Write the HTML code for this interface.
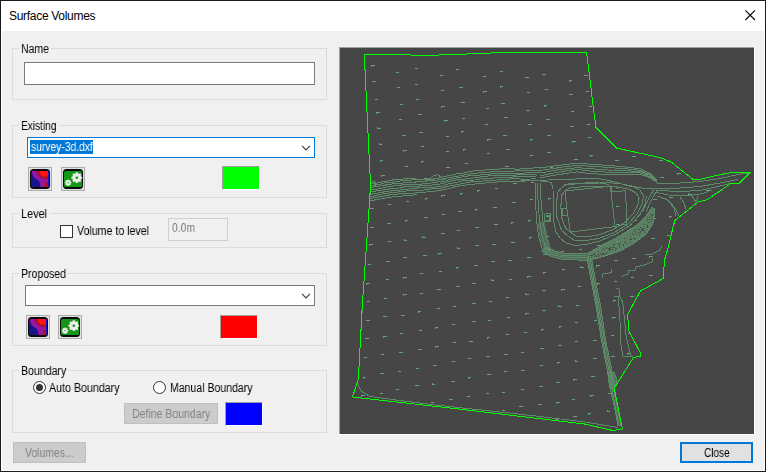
<!DOCTYPE html>
<html><head><meta charset="utf-8"><title>Surface Volumes</title>
<style>
html,body{margin:0;padding:0;}
body{width:766px;height:472px;overflow:hidden;background:#f0f0f0;font-family:"Liberation Sans",Arial,sans-serif;font-size:11px;color:#000;}
.win{position:absolute;left:0;top:0;width:764px;height:470px;border:1px solid #1c1c1c;background:#f0f0f0;box-shadow:inset 1px 0 0 #fff,inset -1px 0 0 #fff,inset 0 -1px 0 #fff;}
.tb{position:absolute;left:1px;top:1px;width:764px;height:30px;background:#fff;}
.title{position:absolute;left:8px;letter-spacing:-0.3px;top:8px;font-size:12px;line-height:14px;white-space:nowrap;}
.x{position:absolute;left:744px;top:9px;}
.abs{position:absolute;box-sizing:border-box;}
.grp{position:absolute;box-sizing:border-box;border:1px solid #dcdcdc;}
.lbl{position:absolute;background:#f0f0f0;line-height:13px;white-space:nowrap;padding:0 2px;}
.t{position:absolute;line-height:14px;font-size:12.5px;white-space:nowrap;}
.s{display:inline-block;transform-origin:0 0;will-change:transform;}
.gap{position:absolute;height:1px;background:#f0f0f0;}
.edit{position:absolute;box-sizing:border-box;background:#fff;border:1px solid #7a7a7a;}
.btn{position:absolute;box-sizing:border-box;border:1px solid #adadad;background:#e1e1e1;text-align:center;}
.ib{position:absolute;box-sizing:border-box;width:24px;height:24px;border:1px solid #adadad;background:#e1e1e1;}
.ib svg{position:absolute;left:1px;top:1px;}
.sw{position:absolute;box-sizing:border-box;border-top:1px solid #a0a0a0;border-left:1px solid #a0a0a0;border-right:1px solid #fff;border-bottom:1px solid #fff;}
.radio{position:absolute;box-sizing:border-box;width:13px;height:13px;border:1px solid #333;border-radius:50%;background:#fff;}
.canvas{position:absolute;left:340px;top:48px;width:414px;height:386px;background:#464646;}
.map{position:absolute;left:0;top:0;}
</style></head><body>
<div class="win"></div>
<div class="tb"><div class="title" id="title">Surface Volumes</div>
<svg class="x" width="11" height="11" viewBox="0 0 11 11"><path d="M0.400 0.400L10 10M10 0.400L0.400 10" stroke="#000" stroke-width="1.100" fill="none"/></svg></div>

<div class="grp" style="left:12px;top:48px;width:315px;height:52px;"></div>
<div class="gap" style="left:19px;top:48px;width:32px;"></div><div class="t" style="left:20.8px;top:42.0px;"><span class="s" style="transform:scaleX(0.835)" id="l1">Name</span></div>
<div class="edit" style="left:24px;top:62px;width:291px;height:23px;"></div>

<div class="grp" style="left:12px;top:125px;width:315px;height:73px;"></div>
<div class="gap" style="left:19px;top:125px;width:40px;"></div><div class="t" style="left:21.0px;top:119.0px;"><span class="s" style="transform:scaleX(0.811)" id="l2">Existing</span></div>
<div class="edit" style="left:27px;top:137px;width:288px;height:21px;border-color:#0078d7;"></div>
<div class="abs" style="left:30px;top:140px;width:63px;height:14px;background:#0078d7;"></div>
<div class="t" style="left:30.7px;top:140.0px;color:#fff;"><span class="s" style="transform:scaleX(0.824)" id="sel">survey-3d.dxf</span></div>
<svg class="abs" style="left:301px;top:144px;" width="10" height="7" viewBox="0 0 10 7"><path d="M1 1.800L5 5.800L9 1.800" stroke="#444" stroke-width="1.200" fill="none"/></svg>
<div class="ib" style="left:28px;top:167px;"><svg width="20" height="20" viewBox="0 0 20 20"><rect x="0" y="0" width="20" height="20" rx="3.5" fill="#0a0a0a"/><clipPath id="ca"><rect x="1" y="2" width="18" height="16" rx="1.5"/></clipPath><g clip-path="url(#ca)"><rect x="1" y="2" width="18" height="16" fill="#15158e"/><path d="M1.800 2L6.700 2L8 5.500L11 8.500L15 9.500L18 10L18 13L15.500 13.500L15 18L10.500 18L10 14L8.500 11.500L5 9.500L2.500 6Z" fill="#9a16a2"/><path d="M6.700 2H18V10.500L15 10L11.500 8.800L8.500 6Z" fill="#b01218"/><path d="M14.800 13.600L18 13V18H14.500Z" fill="#b01218"/><path d="M9.700 2H18V6L16 7.400H12.500L10.300 5.500Z" fill="#ff1515"/><rect x="18" y="2" width="1" height="16" fill="#1c1cc0"/></g></svg></div>
<div class="ib" style="left:61px;top:167px;"><svg width="20" height="20" viewBox="0 0 20 20"><rect x="0" y="0" width="20" height="20" rx="3.500" fill="#0a0a0a"/><rect x="1" y="2" width="18" height="16" rx="1.500" fill="#149714"/><g fill="#f0f0f0"><circle cx="13.800" cy="8.700" r="4.400"/><g stroke="#f0f0f0" stroke-width="2.100"><path d="M13.800 3.300v10.800M8.400 8.700h10.800M10 4.900l7.600 7.600M17.600 4.900l-7.600 7.600"/></g><circle cx="5.100" cy="13.700" r="2.500"/><g stroke="#f0f0f0" stroke-width="1.300"><path d="M5.100 10.400v6.600M1.800 13.700h6.600M2.800 11.400l4.600 4.600M7.400 11.400l-4.600 4.600"/></g></g><circle cx="13.800" cy="8.700" r="2.100" fill="#e0e6e0"/><circle cx="13.800" cy="8.700" r="1.300" fill="#1a9a1a"/><circle cx="5.100" cy="13.700" r="0.800" fill="#2aa02a"/></svg></div>
<div class="sw" style="left:222px;top:166px;width:38px;height:24px;background:#00ff00;"></div>

<div class="grp" style="left:12px;top:213px;width:315px;height:35px;"></div>
<div class="gap" style="left:19px;top:213px;width:31px;"></div><div class="t" style="left:21.0px;top:207.0px;"><span class="s" style="transform:scaleX(0.870)" id="l3">Level</span></div>
<div class="abs" style="left:60px;top:225px;width:13px;height:13px;border:1px solid #333;background:#fff;"></div>
<div class="t" style="left:76.5px;top:224.0px;"><span class="s" style="transform:scaleX(0.849)" id="vtl">Volume to level</span></div>
<div class="abs" style="left:168px;top:218px;width:60px;height:23px;border:1px solid #cfcfcf;background:#f0f0f0;"></div>
<div class="t" style="left:172.0px;top:221.0px;color:#7a7a7a;"><span class="s" style="transform:scaleX(0.826)" id="zero">0.0m</span></div>

<div class="grp" style="left:12px;top:273px;width:315px;height:73px;"></div>
<div class="gap" style="left:19px;top:273px;width:49px;"></div><div class="t" style="left:21.0px;top:267.0px;"><span class="s" style="transform:scaleX(0.841)" id="l4">Proposed</span></div>
<div class="edit" style="left:25px;top:285px;width:290px;height:21px;"></div>
<svg class="abs" style="left:301px;top:292px;" width="10" height="7" viewBox="0 0 10 7"><path d="M1 1.800L5 5.800L9 1.800" stroke="#444" stroke-width="1.200" fill="none"/></svg>
<div class="ib" style="left:26px;top:315px;"><svg width="20" height="20" viewBox="0 0 20 20"><rect x="0" y="0" width="20" height="20" rx="3.5" fill="#0a0a0a"/><clipPath id="cb"><rect x="1" y="2" width="18" height="16" rx="1.5"/></clipPath><g clip-path="url(#cb)"><rect x="1" y="2" width="18" height="16" fill="#15158e"/><path d="M1.800 2L6.700 2L8 5.500L11 8.500L15 9.500L18 10L18 13L15.500 13.500L15 18L10.500 18L10 14L8.500 11.500L5 9.500L2.500 6Z" fill="#9a16a2"/><path d="M6.700 2H18V10.500L15 10L11.500 8.800L8.500 6Z" fill="#b01218"/><path d="M14.800 13.600L18 13V18H14.500Z" fill="#b01218"/><path d="M9.700 2H18V6L16 7.400H12.500L10.300 5.500Z" fill="#ff1515"/><rect x="18" y="2" width="1" height="16" fill="#1c1cc0"/></g></svg></div>
<div class="ib" style="left:58px;top:315px;"><svg width="20" height="20" viewBox="0 0 20 20"><rect x="0" y="0" width="20" height="20" rx="3.500" fill="#0a0a0a"/><rect x="1" y="2" width="18" height="16" rx="1.500" fill="#149714"/><g fill="#f0f0f0"><circle cx="13.800" cy="8.700" r="4.400"/><g stroke="#f0f0f0" stroke-width="2.100"><path d="M13.800 3.300v10.800M8.400 8.700h10.800M10 4.900l7.600 7.600M17.600 4.900l-7.600 7.600"/></g><circle cx="5.100" cy="13.700" r="2.500"/><g stroke="#f0f0f0" stroke-width="1.300"><path d="M5.100 10.400v6.600M1.800 13.700h6.600M2.800 11.400l4.600 4.600M7.400 11.400l-4.600 4.600"/></g></g><circle cx="13.800" cy="8.700" r="2.100" fill="#e0e6e0"/><circle cx="13.800" cy="8.700" r="1.300" fill="#1a9a1a"/><circle cx="5.100" cy="13.700" r="0.800" fill="#2aa02a"/></svg></div>
<div class="sw" style="left:220px;top:315px;width:38px;height:24px;background:#ff0000;"></div>

<div class="grp" style="left:12px;top:370px;width:315px;height:63px;"></div>
<div class="gap" style="left:19px;top:370px;width:49px;"></div><div class="t" style="left:21.0px;top:364.0px;"><span class="s" style="transform:scaleX(0.846)" id="l5">Boundary</span></div>
<div class="radio" style="left:33px;top:381px;"><div class="abs" style="left:2px;top:2px;width:7px;height:7px;border-radius:50%;background:#333;"></div></div>
<div class="t" style="left:48.6px;top:381.0px;"><span class="s" style="transform:scaleX(0.853)" id="ab">Auto Boundary</span></div>
<div class="radio" style="left:153px;top:381px;"></div>
<div class="t" style="left:169.5px;top:381.0px;"><span class="s" style="transform:scaleX(0.842)" id="mb">Manual Boundary</span></div>
<div class="btn" style="left:124px;top:403px;width:94px;height:21px;background:#cccccc;border-color:#bfbfbf;color:#838383;line-height:19px;"></div>
<div class="sw" style="left:225px;top:402px;width:38px;height:24px;background:#0000ff;"></div>

<div class="btn" style="left:13px;top:442px;width:73px;height:21px;background:#cccccc;border-color:#bfbfbf;color:#838383;line-height:19px;"></div>
<div class="btn" style="left:680px;top:442px;width:73px;height:21px;border:2px solid #0078d7;line-height:17px;"></div>

<div class="t" style="left:131.6px;top:407.0px;color:#838383;"><span class="s" style="transform:scaleX(0.841)" id="db">Define Boundary</span></div><div class="t" style="left:24.9px;top:446.0px;color:#838383;"><span class="s" style="transform:scaleX(0.832)" id="vol">Volumes...</span></div><div class="t" style="left:703.6px;top:446.0px;"><span class="s" style="transform:scaleX(0.802)" id="close">Close</span></div>
<div class="abs" style="left:339px;top:47px;width:415px;height:1px;background:#a0a0a0;"></div><div class="abs" style="left:339px;top:47px;width:1px;height:387px;background:#a0a0a0;"></div><div class="abs" style="left:754px;top:47px;width:1px;height:388px;background:#fff;"></div><div class="abs" style="left:339px;top:434px;width:416px;height:1px;background:#fff;"></div>
<div class="canvas"><svg class="map" width="414" height="386" viewBox="0 0 414 386" shape-rendering="crispEdges">
<defs><clipPath id="cp"><polygon points="24.3,6.4 86.0,7.2 114.0,6.8 140.0,5.2 176.0,4.6 220.0,4.4 246.6,4.4 250.0,32.0 253.0,57.0 256.0,79.3 276.3,100.0 320.5,109.7 332.0,114.5 353.3,131.7 361.2,131.2 385.3,125.4 393.6,124.4 410.0,124.4 399.5,135.2 390.5,135.8 367.5,151.5 358.0,154.0 335.0,172.4 333.7,176.5 328.6,198.0 324.4,212.7 323.3,230.5 300.4,243.0 287.5,266.8 289.0,283.0 300.3,304.8 300.3,308.4 293.5,309.3 274.2,340.4 282.5,381.0 272.7,382.5 244.5,376.0 200.0,370.7 118.7,361.0 12.5,349.0 18.4,330.6 22.0,262.0 29.8,149.5 30.5,136.0 28.8,102.0"/></clipPath></defs>
<g clip-path="url(#cp)" stroke="#66a277" stroke-width="1" fill="none">
<path d="M-11 15.5h3M-10.5 16.0v1M15 22.5h3M31 17.5h4M31.5 18.0v1M56 24.5h3M75 20.5h3M100 27.5h3M116 21.5h3M143 28.5h3M160 23.5h3M185 29.5h4M202 26.5h4M229 32.5h3M229.5 33.0v1M244 27.5h4M270 34.5h3M287 28.5h4M314 33.5h4M330 31.5h4M330.5 32.0v1M354 36.5h3M354.5 37.0v1M373 33.5h4M398 39.5h3M415 35.5h4M415.5 36.0v1M442 39.5h3M459 36.5h3M483 43.5h4M-10 32.5h4M15 37.5h3M15.5 38.0v1M32 33.5h4M57 39.5h3M75 36.5h3M101 42.5h3M119 39.5h4M143 43.5h4M143.5 44.0v1M160 38.5h3M160.5 39.0v1M187 44.5h3M205 41.5h3M229 46.5h4M246 43.5h3M273 48.5h4M288 45.5h4M315 50.5h3M331 45.5h3M356 53.5h3M373 48.5h3M398 54.5h4M417 51.5h3M443 57.5h3M443.5 58.0v1M459 52.5h3M484 57.5h4M-7 49.5h4M-6.5 50.0v1M16 53.5h4M16.5 54.0v1M35 51.5h3M60 56.5h3M76 51.5h3M101 58.5h4M101.5 59.0v1M121 54.5h4M146 60.5h3M161 55.5h4M186 62.5h4M204 57.5h3M204.5 58.0v1M231 63.5h3M249 58.5h3M272 64.5h4M291 60.5h4M314 67.5h4M333 62.5h3M358 66.5h4M375 65.5h3M375.5 66.0v1M400 70.5h3M418 66.5h3M442 71.5h3M460 68.5h3M486 73.5h3M-7 63.5h4M17 69.5h4M36 64.5h4M36.5 65.0v1M59 71.5h3M78 66.5h4M104 72.5h4M104.5 73.0v1M122 70.5h3M145 76.5h3M164 69.5h4M188 76.5h4M206 71.5h4M230 78.5h4M247 76.5h3M272 79.5h3M290 77.5h4M317 83.5h4M317.5 84.0v1M335 78.5h4M335.5 79.0v1M357 84.5h4M375 78.5h3M400 86.5h3M400.5 86.0v-1M418 80.5h4M443 86.5h3M463 82.5h3M463.5 83.0v1M486 88.5h3M-6 78.5h4M21 84.5h3M37 80.5h4M37.5 80.0v-1M62 87.5h4M79 84.5h4M106 88.5h3M121 83.5h3M121.5 84.0v1M147 91.5h4M147.5 92.0v1M163 87.5h4M190 91.5h3M190.5 92.0v1M207 87.5h4M232 93.5h4M232.5 94.0v1M248 89.5h3M275 95.5h3M275.5 96.0v1M293 91.5h3M317 98.5h3M335 94.5h4M361 99.5h4M378 94.5h4M403 100.5h3M420 98.5h3M420.5 99.0v1M444 103.5h3M462 97.5h3M488 105.5h3M-6 96.5h3M19 101.5h4M39 96.5h3M39.5 96.0v-1M63 102.5h4M63.5 103.0v1M81 98.5h3M106 103.5h3M123 101.5h3M123.5 102.0v1M147 105.5h3M166 101.5h4M190 107.5h3M207 104.5h4M234 111.5h4M250 107.5h3M250.5 108.0v1M275 112.5h4M292 108.5h4M319 112.5h4M335 110.5h4M362 115.5h4M379 109.5h4M402 118.5h3M420 112.5h4M447 117.5h4M465 114.5h3M488 122.5h3M-4 110.5h4M21 115.5h4M40 112.5h3M40.5 113.0v1M65 118.5h3M81 113.5h3M81.5 114.0v1M106 119.5h4M125 115.5h3M149 121.5h3M165 118.5h4M210 119.5h3M210.5 119.0v-1M293 124.5h4M320 129.5h4M337 125.5h4M337.5 126.0v1M380 126.5h4M422 128.5h3M422.5 129.0v1M-2 127.5h4M22 131.5h3M22.5 132.0v1M41 127.5h4M41.5 128.0v1M66 132.5h3M66.5 132.0v-1M84 130.5h4M13 161.5h4M30 160.5h4M48 156.5h3M66 153.5h3M85 150.5h3M85.5 151.0v1M101 147.5h4M101.5 148.0v1M120 145.5h3M120.5 146.0v1M137 142.5h3M137.5 143.0v1M155 140.5h3M173 135.5h4M191 134.5h3M11 182.5h3M30 179.5h4M47 175.5h4M65 172.5h3M65.5 173.0v1M84 169.5h4M102 166.5h3M118 163.5h4M135 161.5h3M135.5 162.0v1M153 159.5h4M172 154.5h4M190 151.5h3M208 150.5h3M208.5 151.0v1M277 139.5h4M277.5 140.0v1M10 199.5h3M29 196.5h4M29.5 197.0v1M48 193.5h3M64 192.5h3M64.5 192.0v-1M82 189.5h4M82.5 189.0v-1M101 185.5h4M117 182.5h3M135 179.5h4M154 176.5h4M171 174.5h3M171.5 175.0v1M188 172.5h3M188.5 173.0v1M206 168.5h4M276 158.5h3M313 151.5h4M329 149.5h4M348 146.5h4M348.5 146.0v-1M366 142.5h3M10 217.5h3M10.5 218.0v1M28 216.5h3M46 213.5h4M63 209.5h4M83 207.5h4M98 205.5h4M98.5 206.0v1M117 200.5h3M117.5 200.0v-1M135 197.5h4M152 196.5h4M171 194.5h4M189 189.5h3M189.5 190.0v1M206 188.5h3M276 176.5h4M294 172.5h3M312 170.5h4M329 168.5h3M329.5 169.0v1M346 164.5h3M364 161.5h3M364.5 162.0v1M10 236.5h3M26 235.5h4M26.5 236.0v1M46 231.5h3M63 229.5h4M63.5 230.0v1M80 225.5h3M99 223.5h3M116 219.5h3M116.5 220.0v1M134 217.5h4M151 213.5h4M168 212.5h4M187 209.5h4M203 206.5h4M221 203.5h3M239 201.5h3M257 197.5h3M276 193.5h4M293 192.5h3M311 190.5h4M327 187.5h3M345 184.5h3M365 180.5h3M8 256.5h4M27 253.5h3M44 250.5h3M63 246.5h4M63.5 247.0v1M80 245.5h3M97 241.5h4M116 238.5h4M132 235.5h4M151 232.5h3M151.5 232.0v-1M169 231.5h3M187 228.5h4M187.5 229.0v1M203 224.5h3M203.5 225.0v1M222 221.5h3M240 219.5h4M240.5 219.0v-1M256 217.5h4M256.5 218.0v1M274 212.5h4M292 210.5h4M309 208.5h4M309.5 209.0v1M327 206.5h4M346 202.5h3M363 199.5h4M363.5 199.0v-1M8 275.5h3M26 272.5h4M43 268.5h4M61 267.5h4M78 263.5h3M78.5 264.0v1M97 260.5h3M113 258.5h3M132 255.5h4M149 253.5h3M166 249.5h3M185 246.5h4M185.5 246.0v-1M202 242.5h4M221 241.5h4M221.5 242.0v1M238 238.5h3M257 235.5h3M257.5 236.0v1M274 233.5h3M291 229.5h3M309 227.5h4M326 224.5h3M344 221.5h3M344.5 221.0v-1M362 217.5h4M7 294.5h4M25 290.5h4M43 288.5h4M43.5 289.0v1M60 285.5h3M79 282.5h3M95 279.5h3M95.5 280.0v1M112 276.5h3M132 273.5h4M148 272.5h3M167 269.5h3M185 265.5h4M185.5 266.0v1M202 262.5h4M218 258.5h4M218.5 258.0v-1M236 257.5h3M256 254.5h3M273 252.5h3M273.5 253.0v1M290 248.5h4M309 245.5h4M326 241.5h4M342 240.5h4M360 237.5h3M360.5 238.0v1M7 312.5h4M7.5 313.0v1M24 309.5h3M41 306.5h3M59 304.5h4M78 301.5h4M95 298.5h4M95.5 299.0v1M113 294.5h3M129 293.5h4M147 289.5h3M147.5 290.0v1M166 286.5h3M184 284.5h3M201 281.5h3M201.5 282.0v1M219 278.5h3M219.5 279.0v1M235 274.5h3M254 272.5h3M272 269.5h4M272.5 270.0v1M288 266.5h3M307 265.5h4M326 261.5h3M343 259.5h3M360 254.5h4M360.5 255.0v1M4 330.5h3M4.5 331.0v1M23 329.5h3M23.5 330.0v1M40 325.5h4M58 323.5h3M76 320.5h3M93 317.5h4M112 313.5h3M128 310.5h3M146 308.5h4M164 306.5h4M181 304.5h3M200 300.5h4M218 297.5h4M235 293.5h3M253 292.5h4M271 287.5h3M288 285.5h3M307 283.5h3M323 279.5h4M323.5 279.0v-1M341 278.5h3M358 275.5h3M358.5 275.0v-1M5 350.5h4M21 347.5h4M21.5 348.0v1M40 345.5h3M56 341.5h3M75 337.5h4M92 336.5h3M92.5 336.0v-1M111 333.5h4M128 329.5h3M128.5 330.0v1M147 326.5h4M164 323.5h3M181 322.5h4M200 317.5h3M217 314.5h3M217.5 315.0v1M235 313.5h3M235.5 313.0v-1M253 310.5h4M271 308.5h4M287 305.5h4M287.5 306.0v1M304 302.5h4M324 299.5h4M341 295.5h4M359 294.5h4M359.5 295.0v1M4 368.5h3M20 364.5h4M38 363.5h3M55 361.5h4M55.5 362.0v1M73 358.5h3M91 354.5h3M109 351.5h4M127 348.5h3M146 345.5h3M162 344.5h3M181 341.5h3M199 338.5h4M216 334.5h4M233 331.5h4M233.5 332.0v1M251 328.5h4M268 327.5h4M286 322.5h4M304 320.5h4M322 316.5h3M340 315.5h4M356 312.5h4M2 386.5h3M2.5 387.0v1M20 385.5h3M39 380.5h3M56 378.5h4M56.5 379.0v1M74 376.5h3M90 373.5h4M108 369.5h3M126 366.5h3M145 365.5h3M145.5 366.0v1M162 362.5h3M179 358.5h4M198 356.5h4M216 354.5h4M216.5 355.0v1M232 351.5h3M250 347.5h4M250.5 348.0v1M268 345.5h3M287 343.5h3M287.5 344.0v1M304 339.5h4M322 336.5h3M338 334.5h4M357 330.5h3M357.5 330.0v-1M1 406.5h3M1.5 407.0v1M19 404.5h3M19.5 405.0v1M38 400.5h4M38.5 401.0v1M55 397.5h3M71 395.5h3M71.5 396.0v1M89 392.5h4M89.5 393.0v1M107 390.5h3M125 386.5h4M125.5 387.0v1M144 384.5h4M161 380.5h3M180 378.5h4M197 375.5h4M215 371.5h3M233 368.5h4M248 365.5h3M248.5 366.0v1M267 363.5h3M267.5 363.0v-1M285 360.5h4M303 358.5h3M303.5 359.0v1M321 354.5h4M339 351.5h3M339.5 351.0v-1M356 349.5h3M0 425.5h3M0.5 426.0v1M20 422.5h4M20.5 423.0v1M36 420.5h4M36.5 421.0v1M53 416.5h4M71 414.5h4M89 410.5h4M89.5 411.0v1M107 407.5h4M125 404.5h3M142 402.5h4M142.5 403.0v1M160 400.5h3M177 396.5h3M196 392.5h3M213 391.5h4M230 388.5h3M249 386.5h4M266 382.5h4M284 380.5h4M284.5 380.0v-1M302 377.5h3M318 373.5h3M338 371.5h4M354 368.5h3M0 443.5h4M17 441.5h4M34 438.5h4M52 435.5h3M70 431.5h4M89 430.5h4M89.5 431.0v1M106 427.5h3M106.5 428.0v1M123 424.5h4M142 421.5h4M159 418.5h4M176 415.5h4M195 412.5h3M212 410.5h3M231 406.5h4M249 404.5h3M249.5 405.0v1M265 402.5h4M282 399.5h4M302 396.5h4M318 393.5h3M335 389.5h3M355 387.5h3"/>
</g>
<g clip-path="url(#cp)" stroke="#5d8b69" stroke-width="1" fill="none">
<polyline points="26.0,136.4 31.0,135.6 36.0,135.2 44.0,133.6 49.0,132.7 55.0,131.5 62.0,131.1 68.0,130.5 76.0,130.0"/>
<polyline points="26.0,139.2 31.0,137.8 39.0,136.5 44.0,135.0 52.0,134.3 57.0,133.5 63.0,132.6 68.0,132.2 74.0,131.9 82.0,131.4 89.0,131.4 97.0,130.7 102.0,129.0 110.0,127.4 116.0,126.0 124.0,125.0 132.0,123.1 138.0,122.5 144.0,122.2 150.0,121.4 157.0,121.2 164.0,120.7 172.0,120.7 177.0,121.2 185.0,120.7 192.0,120.1 200.0,119.4"/>
<polyline points="26.0,140.9 34.0,139.0 39.0,138.3 45.0,137.1 51.0,136.1 58.0,135.6 64.0,134.9 72.0,134.6 78.0,133.6 85.0,133.1 93.0,132.6 99.0,131.9 107.0,130.1 113.0,129.0 119.0,128.0 126.0,126.6 134.0,125.5 141.0,124.7 149.0,124.2 155.0,123.3 160.0,123.4 165.0,123.1 172.0,123.2 180.0,122.4 186.0,122.3 194.0,122.3 200.0,122.0"/>
<polyline points="26.0,142.9 31.0,141.7 38.0,141.0 45.0,139.1 52.0,138.1 59.0,137.2 67.0,136.6 75.0,136.5 83.0,135.9 89.0,135.5 95.0,134.2 102.0,133.8 107.0,132.3 115.0,130.2 123.0,128.8 128.0,128.0 133.0,127.4 139.0,127.1 144.0,126.5 150.0,126.0 157.0,125.2 162.0,125.3 168.0,125.2 174.0,125.1 181.0,125.2 188.0,124.9 193.0,124.6 200.0,124.3"/>
<polyline points="26.0,145.6 31.0,143.8 38.0,142.6 45.0,141.7 50.0,140.7 58.0,140.2 64.0,138.9 69.0,138.6 77.0,138.1 84.0,137.8 92.0,137.0 98.0,136.4 104.0,135.0 110.0,133.1 117.0,131.9 123.0,131.5 129.0,130.3 135.0,129.9 141.0,128.8 149.0,127.9 156.0,127.4 164.0,127.5 170.0,127.4 175.0,127.1 183.0,126.5 190.0,126.7 196.0,126.5"/>
<polyline points="26.0,147.4 32.0,146.0 37.0,145.2 43.0,144.1 49.0,143.1 57.0,142.3 65.0,141.4 70.0,140.9 75.0,140.3 81.0,139.6 88.0,139.3 93.0,139.2 101.0,138.3 107.0,136.2 115.0,134.7 122.0,133.0 127.0,132.2 135.0,132.0 143.0,130.5 150.0,130.7 157.0,129.4 165.0,129.8 173.0,129.0 180.0,128.7 185.0,129.0 192.0,128.6 197.0,127.9"/>
<polyline points="26.0,149.0 34.0,148.1 41.0,146.4 47.0,145.1 54.0,144.7 61.0,143.4 68.0,142.8 75.0,142.2 82.0,142.3 89.0,141.2 94.0,140.7 102.0,140.1 108.0,138.2 116.0,136.8 123.0,135.4 128.0,134.3 134.0,133.5 142.0,133.1 150.0,132.0 155.0,132.3 163.0,131.3 170.0,131.0 178.0,130.9 183.0,131.2 191.0,131.0 196.0,130.3"/>
<polyline points="26.0,151.9 32.0,150.2 37.0,149.3 44.0,148.1 52.0,146.5 59.0,145.9 67.0,145.6 73.0,145.2 78.0,144.7 83.0,144.3 90.0,143.6 97.0,142.9 105.0,141.5 113.0,139.4 119.0,137.9 126.0,137.0 131.0,136.6 137.0,135.7 145.0,135.0 151.0,134.5 158.0,133.9 166.0,133.5 172.0,133.5 180.0,133.1 186.0,132.7 192.0,132.7 197.0,132.2"/>
<polyline points="26.0,153.7 32.0,152.4 39.0,151.3 45.0,149.9 51.0,149.1 56.0,148.6 61.0,148.1 66.0,147.6 72.0,147.3 77.0,146.7"/>
<polyline points="88.0,132.5 93.0,128.0 97.0,126.5 101.0,129.0 106.0,133.0"/>
<polyline points="30.0,136.0 33.0,133.0 36.0,135.0 34.0,138.0"/>
<polyline points="200.0,120.1 212.0,118.2 220.0,117.2 237.0,115.1 250.0,116.2 270.0,117.5 288.0,119.3 300.0,120.7 310.0,125.3 317.0,132.6"/>
<polyline points="200.0,122.4 212.0,120.8 220.0,119.4 237.0,117.4 250.0,118.2 270.0,119.6 288.0,121.0 300.0,122.3 310.0,126.7 317.0,132.7"/>
<polyline points="200.0,125.1 212.0,122.8 220.0,121.6 237.0,119.6 250.0,120.6 270.0,122.2 288.0,122.9 300.0,123.4 310.0,127.5 317.0,133.5"/>
<polyline points="200.0,127.7 212.0,125.4 220.0,123.7 237.0,121.3 250.0,123.0 270.0,124.3 288.0,124.5 300.0,125.0 310.0,128.7 317.0,134.1"/>
<polyline points="200.0,129.9 212.0,127.6 220.0,126.4 237.0,123.8 250.0,125.7 270.0,126.5 288.0,126.9 300.0,126.2 310.0,129.8 317.0,134.3"/>
<polyline points="160.0,133.5 180.0,133.2 200.0,132.5 220.0,131.2 260.0,130.7 275.0,134.0 289.0,138.0 302.0,140.0 313.0,141.0"/>
<polyline points="224.0,137.0 240.0,135.6 260.0,135.0 268.0,136.3 271.5,139.0 272.0,144.0"/>
<polyline points="195.0,134.0 195.5,152.0 196.5,172.0 198.5,188.0 202.0,200.0 208.0,206.0"/>
<polyline points="197.5,135.0 198.0,152.0 199.5,172.0 202.0,188.0 205.5,198.0 211.0,203.5"/>
<polyline points="200.0,135.0 201.0,152.0 203.0,174.0 206.0,190.0 209.0,197.0"/>
<polyline points="201.5,133.5 207.0,133.0 211.5,135.0 213.0,141.0 213.5,173.0 216.0,184.0 220.0,190.0 226.0,195.0"/>
<polyline points="204.7,165.5 210.0,165.5 210.0,173.4 204.7,173.4 204.7,165.5"/>
<polyline points="206.0,167.0 209.0,167.0 209.0,172.0 206.0,172.0"/>
<polyline points="228.0,136.0 222.0,139.0 217.5,144.5 216.5,157.0 217.0,169.5 221.8,182.6 228.4,188.5 235.0,192.5 246.0,192.5 258.7,190.5 273.0,185.0 288.0,176.2 297.0,166.0 302.0,156.0 303.5,148.0 300.0,142.0 292.0,138.0 280.0,135.5 264.0,134.5 245.0,135.0 228.0,136.0"/>
<polyline points="231.2,139.5 225.8,142.1 221.8,146.9 220.9,157.8 221.3,168.7 225.6,180.1 231.6,185.2 237.5,188.7 247.4,188.7 258.8,186.9 271.7,182.1 285.2,174.5 293.3,165.6 297.8,156.9 299.1,150.0 296.0,144.7 288.8,141.2 278.0,139.1 263.6,138.2 246.5,138.6 231.2,139.5"/>
<polyline points="226.0,195.0 235.0,197.5 246.0,196.5 260.0,193.0 276.0,186.0 290.0,177.5 300.0,166.5 305.0,156.0 306.5,148.0"/>
<polyline points="225.0,143.0 270.4,138.2 272.5,157.0 275.0,178.6 230.3,184.0 227.0,162.0 225.0,143.0"/>
<polyline points="226.5,160.0 222.0,160.5 222.5,168.0 227.3,167.5"/>
<polyline points="271.7,144.0 285.5,142.7 287.0,176.0 275.0,178.6"/>
<polyline points="204.5,198.1 213.3,202.4 222.3,205.2 231.3,205.4 240.1,205.8 248.2,205.9"/>
<polyline points="203.7,199.7 212.1,204.5 222.0,207.2 231.1,207.2 239.8,207.9 248.0,208.0"/>
<polyline points="202.4,201.3 211.3,206.5 221.7,208.7 230.9,209.8 239.7,209.8 248.1,209.9"/>
<polyline points="201.4,203.1 210.8,208.3 221.5,211.2 231.1,211.2 239.9,212.2 248.2,212.2"/>
<polyline points="251.2,208.7 253.1,219.5 255.8,233.8 260.4,256.7 265.6,291.8 269.3,309.6 272.2,323.5 274.2,337.6 277.9,356.5 282.1,377.9"/>
<polyline points="249.8,208.8 251.6,219.7 254.2,233.6 258.5,257.1 264.3,291.8 267.8,309.7 270.6,323.6 272.7,337.7 276.9,356.9 281.0,377.8"/>
<polyline points="248.5,209.2 250.0,219.9 252.8,234.4 257.1,257.3 262.7,292.4 266.0,310.1 269.5,324.0 271.1,337.9 275.0,357.0 279.3,378.0"/>
<polyline points="246.8,209.2 248.9,220.6 251.4,234.2 256.0,257.7 261.4,292.1 265.0,310.7 267.7,324.2 269.6,338.4 274.1,357.5 278.1,378.2"/>
<polyline points="282.5,252.0 284.0,267.0 286.0,287.0 290.5,308.0"/>
<polyline points="278.0,248.0 279.5,264.0 280.5,282.0 281.0,297.0 283.0,308.0 293.0,309.0"/>
<polyline points="262.5,230.5 263.0,226.0 271.5,224.5 271.5,221.0"/>
<polyline points="280.8,228.7 288.0,226.0 288.5,223.0 295.5,222.0 296.0,219.0 304.0,217.0 312.0,214.0 312.5,210.0"/>
<polyline points="305.0,207.0 312.0,206.0 320.0,202.0 322.0,198.0"/>
<polyline points="276.0,241.0 279.0,240.7 279.5,248.0 282.6,253.5"/>
<polyline points="274.0,248.0 279.0,248.0"/>
<polyline points="17.0,335.0 21.0,343.0 30.0,348.5 60.0,352.5 100.0,357.5 160.0,364.0 200.0,368.5 245.0,374.0 260.0,376.5 278.0,379.5"/>
<polyline points="28.0,150.0 26.5,192.0 23.0,247.0 20.5,292.0 18.0,324.0 14.5,345.0"/>
<polyline points="317.0,136.0 340.0,135.0 360.0,133.5 380.0,130.5 398.0,126.5 408.0,125.0"/>
<polyline points="315.0,140.0 340.0,140.0 360.0,138.5 380.0,135.0 398.0,131.5"/>
<polyline points="317.0,142.5 340.0,143.5 360.0,142.5 376.0,139.0 390.0,135.5"/>
<polyline points="315.0,144.0 328.0,147.0 350.0,147.5 363.0,145.5 372.0,142.0"/>
<polyline points="317.0,148.0 328.0,152.0 334.0,160.0 336.0,168.0"/>
<polyline points="324.0,150.0 331.0,155.0 336.0,162.0 339.0,168.0"/>
<polyline points="340.0,149.0 344.0,155.0 346.0,162.0"/>
<polyline points="352.0,148.0 356.0,154.0 358.0,148.0"/>
<polyline points="302.5,164.0 308.0,152.0 314.4,140.0"/>
<polyline points="306.0,164.0 311.0,153.0 317.0,142.0"/>
<polygon points="247.6,205.4 260.0,198.3 273.3,191.5 286.0,184.0 297.2,176.8 304.0,170.5 309.7,163.0 312.0,159.4 314.0,160.3 314.6,164.8 313.1,175.2 306.1,186.0 293.5,195.6 278.9,203.5 264.5,208.2 250.6,211.8" fill="#5d8b69" fill-opacity="0.85" stroke="#5d8b69"/>
<polygon points="204.5,197.9 213.1,202.7 222.5,205.0 231.2,205.5 240.1,206.0 248.0,206.0 248.0,212.0 239.9,212.0 230.8,211.5 221.5,211.0 210.9,208.3 201.5,203.1" fill="#5d8b69" fill-opacity="0.55" stroke="none"/>
<polygon points="197.5,174.0 205.0,174.0 208.0,190.0 212.0,202.0 205.0,203.5 200.0,192.0" fill="#5d8b69" fill-opacity="0.55" stroke="none"/>
<polygon points="269.0,324.0 274.0,324.0 277.0,332.0 275.0,340.0 271.0,340.0 268.0,332.0" fill="#5d8b69" fill-opacity="0.7"/>
<polygon points="251.2,208.6 253.2,219.6 255.7,233.6 260.2,256.6 265.7,291.6 269.2,309.6 272.2,323.6 274.2,337.6 278.2,356.6 282.2,377.6 277.8,378.4 273.8,357.4 269.8,338.4 267.8,324.4 264.8,310.4 261.3,292.4 255.8,257.4 251.3,234.4 248.8,220.4 246.8,209.4" fill="#5d8b69" fill-opacity="0.45" stroke="none"/>
</g>
<g clip-path="url(#cp)" fill="#464646">
<rect x="268" y="200" width="1" height="1"/>
<rect x="298" y="181" width="1" height="1"/>
<rect x="252" y="207" width="1" height="1"/>
<rect x="271" y="201" width="1" height="1"/>
<rect x="308" y="174" width="1" height="1"/>
<rect x="262" y="206" width="1" height="1"/>
<rect x="294" y="190" width="1" height="1"/>
<rect x="255" y="207" width="1" height="1"/>
<rect x="270" y="201" width="1" height="1"/>
<rect x="290" y="194" width="1" height="1"/>
<rect x="307" y="178" width="1" height="1"/>
<rect x="307" y="177" width="1" height="1"/>
<rect x="307" y="169" width="1" height="1"/>
<rect x="269" y="201" width="1" height="1"/>
<rect x="298" y="184" width="1" height="1"/>
<rect x="279" y="196" width="1" height="1"/>
<rect x="299" y="187" width="1" height="1"/>
<rect x="312" y="170" width="1" height="1"/>
<rect x="300" y="184" width="1" height="1"/>
<rect x="313" y="166" width="1" height="1"/>
<rect x="302" y="182" width="1" height="1"/>
<rect x="294" y="183" width="1" height="1"/>
<rect x="312" y="170" width="1" height="1"/>
<rect x="307" y="172" width="1" height="1"/>
<rect x="275" y="202" width="1" height="1"/>
<rect x="253" y="205" width="1" height="1"/>
<rect x="303" y="182" width="1" height="1"/>
<rect x="312" y="167" width="1" height="1"/>
<rect x="271" y="199" width="1" height="1"/>
<rect x="250" y="207" width="1" height="1"/>
<rect x="295" y="181" width="1" height="1"/>
<rect x="308" y="174" width="1" height="1"/>
<rect x="309" y="169" width="1" height="1"/>
<rect x="293" y="190" width="1" height="1"/>
<rect x="295" y="191" width="1" height="1"/>
<rect x="290" y="191" width="1" height="1"/>
<rect x="267" y="204" width="1" height="1"/>
<rect x="292" y="185" width="1" height="1"/>
<rect x="284" y="190" width="1" height="1"/>
<rect x="299" y="181" width="1" height="1"/>
<rect x="299" y="185" width="1" height="1"/>
<rect x="279" y="199" width="1" height="1"/>
<rect x="249" y="209" width="1" height="1"/>
<rect x="310" y="166" width="1" height="1"/>
<rect x="295" y="184" width="1" height="1"/>
<rect x="273" y="199" width="1" height="1"/>
<rect x="272" y="201" width="1" height="1"/>
<rect x="251" y="209" width="1" height="1"/>
<rect x="272" y="201" width="1" height="1"/>
<rect x="266" y="200" width="1" height="1"/>
<rect x="300" y="179" width="1" height="1"/>
<rect x="279" y="197" width="1" height="1"/>
<rect x="307" y="171" width="1" height="1"/>
<rect x="304" y="182" width="1" height="1"/>
<rect x="264" y="202" width="1" height="1"/>
<rect x="266" y="205" width="1" height="1"/>
<rect x="262" y="205" width="1" height="1"/>
<rect x="303" y="182" width="1" height="1"/>
<rect x="258" y="206" width="1" height="1"/>
<rect x="270" y="199" width="1" height="1"/>
<rect x="283" y="197" width="1" height="1"/>
<rect x="258" y="207" width="1" height="1"/>
<rect x="312" y="170" width="1" height="1"/>
<rect x="313" y="166" width="1" height="1"/>
<rect x="307" y="179" width="1" height="1"/>
<rect x="290" y="188" width="1" height="1"/>
<rect x="264" y="202" width="1" height="1"/>
<rect x="274" y="196" width="1" height="1"/>
<rect x="311" y="171" width="1" height="1"/>
<rect x="312" y="170" width="1" height="1"/>
<rect x="251" y="207" width="1" height="1"/>
<rect x="274" y="199" width="1" height="1"/>
<rect x="286" y="195" width="1" height="1"/>
<rect x="275" y="200" width="1" height="1"/>
<rect x="290" y="190" width="1" height="1"/>
<rect x="265" y="205" width="1" height="1"/>
<rect x="264" y="206" width="1" height="1"/>
<rect x="309" y="171" width="1" height="1"/>
<rect x="302" y="180" width="1" height="1"/>
<rect x="269" y="200" width="1" height="1"/>
<rect x="283" y="196" width="1" height="1"/>
<rect x="247" y="207" width="1" height="1"/>
<rect x="256" y="208" width="1" height="1"/>
<rect x="307" y="172" width="1" height="1"/>
<rect x="273" y="197" width="1" height="1"/>
<rect x="301" y="181" width="1" height="1"/>
<rect x="263" y="200" width="1" height="1"/>
<rect x="296" y="186" width="1" height="1"/>
<rect x="254" y="205" width="1" height="1"/>
<rect x="300" y="184" width="1" height="1"/>
<rect x="308" y="174" width="1" height="1"/>
<rect x="279" y="197" width="1" height="1"/>
<rect x="285" y="193" width="1" height="1"/>
<rect x="269" y="202" width="1" height="1"/>
<rect x="254" y="206" width="1" height="1"/>
<rect x="312" y="170" width="1" height="1"/>
<rect x="311" y="168" width="1" height="1"/>
<rect x="284" y="194" width="1" height="1"/>
<rect x="305" y="184" width="1" height="1"/>
<rect x="304" y="182" width="1" height="1"/>
<rect x="258" y="203" width="1" height="1"/>
<rect x="262" y="201" width="1" height="1"/>
<rect x="254" y="208" width="1" height="1"/>
<rect x="260" y="205" width="1" height="1"/>
<rect x="261" y="206" width="1" height="1"/>
<rect x="311" y="173" width="1" height="1"/>
<rect x="304" y="176" width="1" height="1"/>
<rect x="293" y="186" width="1" height="1"/>
<rect x="308" y="174" width="1" height="1"/>
<rect x="276" y="200" width="1" height="1"/>
<rect x="266" y="199" width="1" height="1"/>
<rect x="300" y="183" width="1" height="1"/>
<rect x="278" y="195" width="1" height="1"/>
<rect x="280" y="194" width="1" height="1"/>
<rect x="311" y="166" width="1" height="1"/>
<rect x="263" y="205" width="1" height="1"/>
<rect x="302" y="181" width="1" height="1"/>
<rect x="303" y="180" width="1" height="1"/>
<rect x="258" y="208" width="1" height="1"/>
<rect x="291" y="191" width="1" height="1"/>
</g>
<polygon points="24.3,6.4 86.0,7.2 114.0,6.8 140.0,5.2 176.0,4.6 220.0,4.4 246.6,4.4 250.0,32.0 253.0,57.0 256.0,79.3 276.3,100.0 320.5,109.7 332.0,114.5 353.3,131.7 361.2,131.2 385.3,125.4 393.6,124.4 410.0,124.4 399.5,135.2 390.5,135.8 367.5,151.5 358.0,154.0 335.0,172.4 333.7,176.5 328.6,198.0 324.4,212.7 323.3,230.5 300.4,243.0 287.5,266.8 289.0,283.0 300.3,304.8 300.3,308.4 293.5,309.3 274.2,340.4 282.5,381.0 272.7,382.5 244.5,376.0 200.0,370.7 118.7,361.0 12.5,349.0 18.4,330.6 22.0,262.0 29.8,149.5 30.5,136.0 28.8,102.0" fill="none" stroke="#00ff00" stroke-width="1" shape-rendering="crispEdges"/>
</svg></div>
</body></html>
